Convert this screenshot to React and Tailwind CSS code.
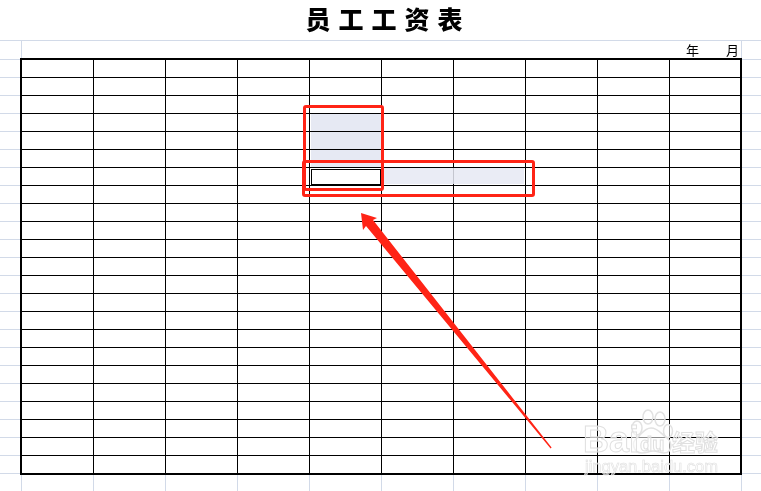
import React from "react";

const gutterRows = Array.from({ length: 23 });
const cells = Array.from({ length: 230 });
const footerCols = Array.from({ length: 9 });
const cjk = "font-['Noto_Sans_CJK_SC','Liberation_Sans',sans-serif]";

function Gutter({ className }) {
  return (
    <div className={`flex flex-col ${className}`}>
      <div className="h-[19px] shrink-0 border-b border-[#d2dae8]" />
      {gutterRows.map((_, i) => (
        <div key={i} className="h-[18px] shrink-0 border-b border-[#d2dae8]" />
      ))}
    </div>
  );
}

function Watermark() {
  return (
    <div className="absolute left-[583px] top-[409px] h-[66px] w-[138px]">
      <svg className="absolute left-[44px] top-0" width="48" height="46" viewBox="0 0 48 46" fill="rgba(255,255,255,0.55)" stroke="#e2e2e2" strokeWidth="1.5">
        <ellipse cx="10" cy="19" rx="5" ry="7" />
        <ellipse cx="21" cy="8" rx="5" ry="7" />
        <ellipse cx="33" cy="10" rx="5" ry="7" />
        <ellipse cx="41" cy="22" rx="4.5" ry="6.5" />
        <path d="M24 19 C17 19 15 25 10 29 C4 33 6 44 15 44 C20 44 22 42 26 42 C31 42 33 44 37 44 C45 44 46 34 40 29 C34 25 31 19 24 19 Z" />
      </svg>
      <span className="absolute left-0 top-[15px] font-['Liberation_Sans',sans-serif] text-[36px] font-bold leading-[32px] text-white/55 [-webkit-text-stroke:1px_#e0e0e0]">Bai</span>
      <span className="absolute left-[57px] top-[24px] font-['Liberation_Sans',sans-serif] text-[20px] font-bold leading-[22px] text-white/55 [-webkit-text-stroke:1px_#e0e0e0]">du</span>
      <span className={`absolute left-[89px] top-[17px] ${cjk} text-[23px] font-bold leading-[30px] text-white/55 [-webkit-text-stroke:1px_#e0e0e0]`}>经验</span>
      <span className="absolute left-[2px] top-[48px] font-['Liberation_Sans',sans-serif] text-[16.5px] leading-[18px] whitespace-nowrap text-white/50 [-webkit-text-stroke:0.6px_#e0e0e0]">jingyan.baidu.com</span>
    </div>
  );
}

export default function App() {
  return (
    <div className="relative flex h-[491px] w-[761px] flex-col overflow-hidden bg-white">
      <div className={`flex h-[41px] shrink-0 items-center justify-center border-b border-[#d2dae8] pb-[3px] pl-[15px] ${cjk} text-[25px] font-black leading-none tracking-[8px] text-black`}>
        员工工资表
      </div>
      <div className="flex flex-1">
        <Gutter className="w-[20px] shrink-0" />
        <div className="flex w-[722px] shrink-0 flex-col">
          <div className={`ml-px flex h-[17px] shrink-0 items-center justify-end gap-[27px] border-x border-[#d2dae8] pr-[2px] ${cjk} text-[13px] leading-none text-black`}>
            <span>年</span>
            <span>月</span>
          </div>
          <div className="grid h-[417px] shrink-0 grid-cols-[repeat(9,72px)_70px] grid-rows-[repeat(22,18px)_17px] border-2 border-black bg-white">
            {cells.map((_, i) => (
              <div
                key={i}
                className={`${i % 10 === 9 ? "" : "border-r"} ${i >= 220 ? "" : "border-b"} border-black`}
              />
            ))}
          </div>
          <div className="ml-px flex flex-1">
            {footerCols.map((_, i) => (
              <div key={i} className="w-[72px] border-l border-[#d2dae8]" />
            ))}
            <div className="w-[73px] border-x border-[#d2dae8]" />
          </div>
        </div>
        <Gutter className="flex-1" />
      </div>

      {/* selection shading */}
      <div className="absolute left-[311px] top-[114px] h-[54px] w-[70px] bg-[#e6e9f3] mix-blend-multiply" />
      <div className="absolute left-[382px] top-[168px] h-[16px] w-[142px] bg-[#e6e9f3]/85" />
      <div className="absolute left-[311px] top-[169px] h-[16px] w-[70px] border border-black bg-white" />

      {/* annotations */}
      <div className="absolute left-[303px] top-[105px] h-[86px] w-[81px] rounded-[3px] border-[3px] border-[#ff2416]" />
      <div className="absolute left-[302px] top-[160px] h-[37px] w-[233px] rounded-[3px] border-[3px] border-[#ff2416]" />
      <svg className="absolute left-0 top-0" width="761" height="491" viewBox="0 0 761 491">
        <polygon points="361,213 377,218 373,220 551.6,447.6 550.6,448.4 366,226 363,230" fill="#ff2416" />
      </svg>
      <Watermark />
    </div>
  );
}
